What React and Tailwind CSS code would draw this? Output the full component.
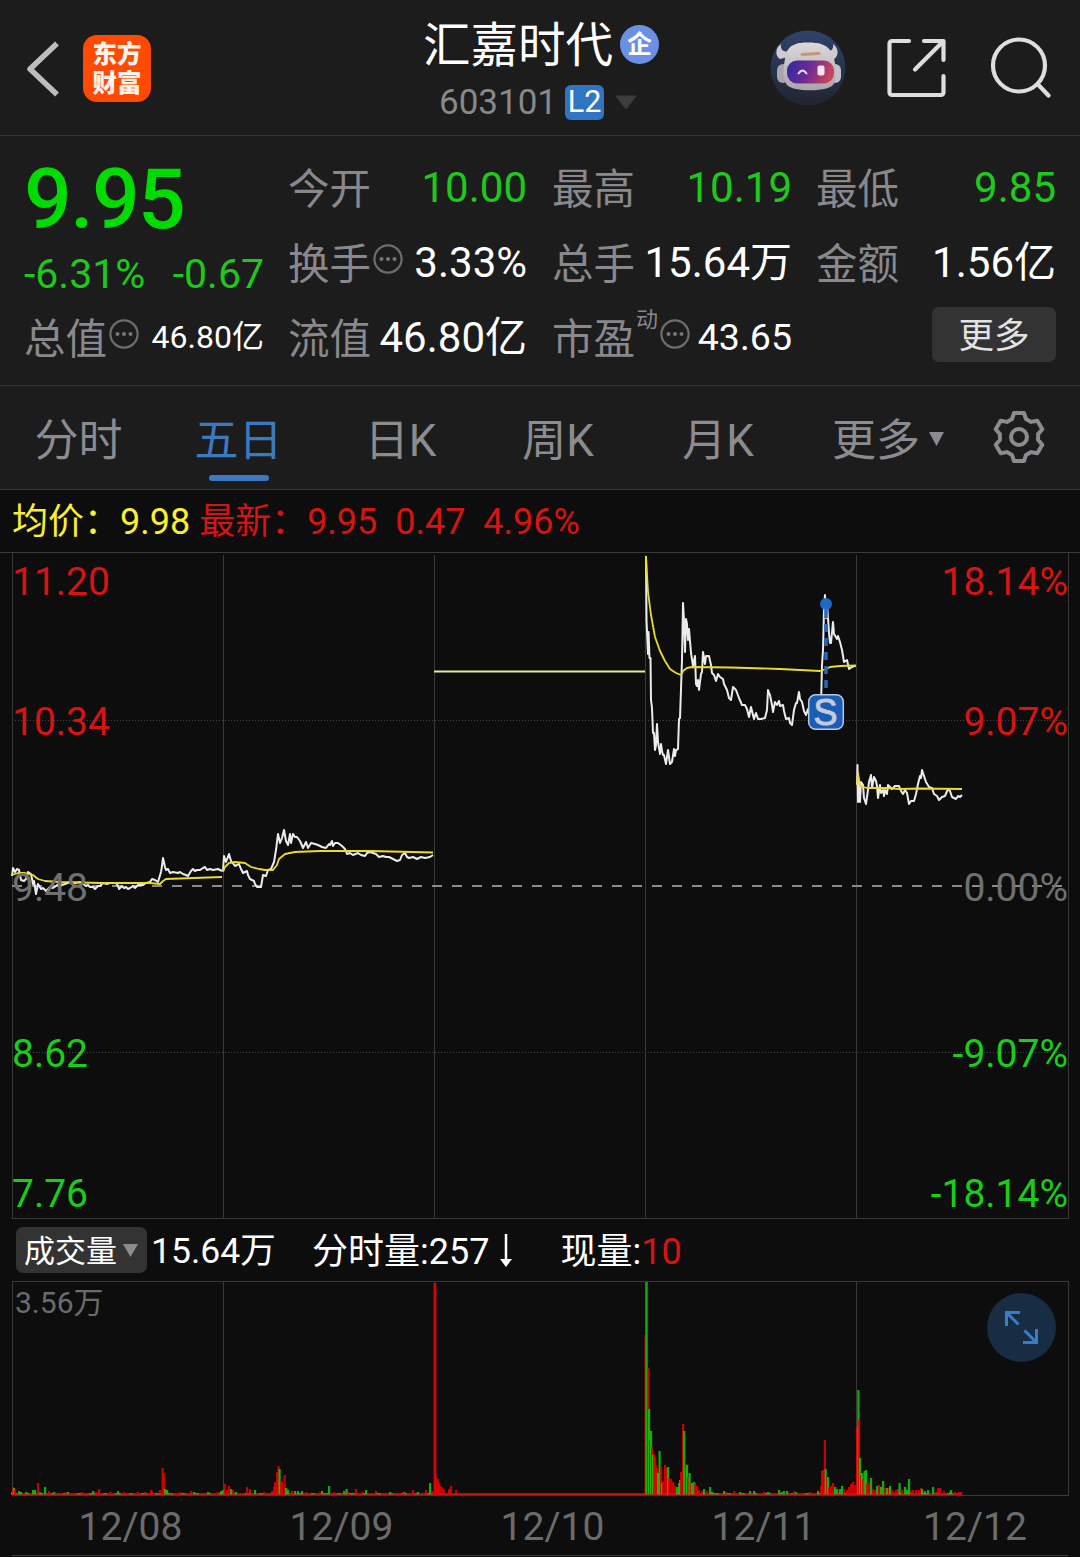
const PRICE = [
    "12,876 13,868 15,872 17,869 19,870 21,880 24,881 26,879 28,872 31,874 33,884 34,881 36,894 38,884 41,889 43,888 46,891 50,887 53,888 56,886 60,883 62,885 65,884 70,882 75,883 80,882 83,884 86,886 88,885 90,887 93,887 95,889 98,886 100,886 103,883 107,884 110,883 116,883 118,886 119,889 122,886 124,888 126,887 128,889 130,888 133,886 135,888 138,885 143,885 146,883 150,882 152,879 155,880 158,882 161,872 162,866 163,858 165,867 166,870 168,869 170,873 173,872 178,873 180,872 183,874 186,875 188,876 191,871 193,869 195,871 197,870 200,870 203,868 205,867 207,870 210,869 213,870 218,869 222,871",
    "223,871 224,856 226,862 229,854 231,861 235,866 239,864 241,869 243,873 247,871 248,875 250,879 254,881 255,884 257,887 261,887 263,875 266,876 268,870 271,869 274,862 276,850 278,834 280,843 282,838 284,830 286,841 288,845 290,834 291,843 293,834 295,837 297,837 300,841 303,848 306,842 308,848 311,843 315,844 318,845 322,847 326,848 329,844 330,845 332,841 333,846 335,843 338,843 342,846 345,849 347,854 350,853 353,855 358,853 361,855 365,856 367,853 370,852 373,853 376,854 379,857 383,856 386,857 389,857 393,859 397,861 400,860 402,855 405,853 407,857 409,858 413,857 417,859 421,857 425,858 430,857 433,855",
    "646,556 646.5,620 648,654 648.5,632 649.5,658 650.5,658 651,700 652,708 653,733 654,733 655,750 656,745 657,724 658,742 660,754 661,744 662,751 663,755 664,755 666,764 668,750 669,757 670,764 672,762 674,749 675,756 676,750 678,749 679,719 680,718 682,660 683,603 684,620 685,652 686,619 687,624 688,640 689,629 691,653 693,666 695,656 696,684 697,686 698,680 699,690 701,674 702,672 703,652 705,664 706,656 709,656 711,665 712,673 714,675 716,681 718,674 720,677 723,679 724,684 727,690 729,698 731,700 733,687 736,690 739,698 742,705 745,705 747,709 749,717 751,707 754,719 756,713 758,719 761,719 765,718 767,710 768,690 770,695 772,705 773,712 775,702 777,705 779,701 780,706 783,705 784,711 786,719 789,718 790,723 792,725 794,710 796,703 797,703 799,692 800,699 802,702 804,711 806,715 808,709 809,714 812,710 813,704 815,698 816,705 818,702 821,706 822,665 823,650 824,610 825,595 826,618 827,604 829,633 830,643 831,643 833,622 834,634 837,639 838,636 840,642 842,650 844,662 847,660 849,669 852,667 854,666 856,666",
    "857,785 857.5,765 858,802 859,782 860,802 861,782 863,785 864,798 866,804 868,790 869,782 871,775 872,788 874,777 876,781 877,786 878,798 880,785 881,793 883,790 884,796 885,790 887,794 888,785 890,787 892,789 895,786 899,786 901,791 903,794 905,790 907,793 909,804 911,801 914,801 916,794 918,784 920,776 921,778 922,770 924,776 926,782 929,787 932,788 934,794 937,796 939,800 942,797 945,796 948,789 950,791 952,797 954,798 956,799 958,796 960,797 962,795",
]

const AVERAGE = [
    "12,875 18,873 25,873 33,875 38,879 45,881 60,882 100,883 150,883 160,884 163,881 166,879 222,877",
    "223,872 225,867 229,863 235,862 245,863 251,867 259,869 265,870 273,870 277,865 279,859 285,854 295,852 320,851 370,851 433,852.5",
    "646,556 648,592 651,615 655,637 660,651 665,661 670,669 676,673 681,675 683,671 687,668 692,667 730,667.5 780,669 820,671 826,669 830,667 840,666 856,665.5",
    "857,785 858,773 860,786 867,788 885,788 900,789 920,788.5 962,789",
]

const R = "#e60000"
const G = "#0ccc0c"

// x, height, colour
const SPIKES = [
    [13, 8, R], [14, 7, G], [15, 5, R], [19, 4, G], [21, 3, G], [33, 5, G], [35, 5, G], [38, 12, R], [45, 8, G], [49, 4, R],
    [66, 3, R], [93, 4, G], [99, 6, R], [118, 4, G], [145, 3, R], [151, 5, R], [160, 5, R], [162.5, 27, R], [164, 22, R], [165, 6, G], [167, 5, G],
    [191, 4, R], [218, 3, R], [221, 4, G], [223, 5, G], [224.5, 11, R], [227, 5, R], [229, 9, R], [231, 6, G], [233, 5, R],
    [247, 8, R], [250, 6, R], [255, 5, G], [272, 4, R], [274, 8, R], [275, 13, R], [277, 23, R], [278.5, 29, R], [279.5, 26, G], [281, 14, R],
    [282, 13, R], [284.5, 20, R], [286, 7, G], [288, 5, G], [292, 4, R], [295, 4, G], [298, 4, G], [302, 4, G], [322, 4, G], [329, 9, G],
    [344, 4, G], [346.5, 6, G], [356, 6, R], [366, 5, G], [376, 4, R], [403, 3, R], [413, 5, R], [426, 5, R], [430, 12, G], [432, 4, R],
    [434.5, 212, R], [435.2, 212, R], [436, 18, R], [438, 16, R], [439, 12, R], [440, 9, R], [442, 8, R], [444, 6, R], [449, 6, R], [451, 9, R], [456, 5, R],
    [645.5, 160, R], [646.5, 213, G], [648.5, 127, R], [649, 86, G], [650, 55, R], [651, 64, G], [652, 48, R], [653, 40, G], [654, 41, R], [655, 38, R],
    [656, 30, R], [657, 27, R], [658, 22, G], [659.5, 44, G], [661, 28, R], [662, 12, G], [663, 14, R], [665, 30, R], [666, 27, R], [668, 28, G],
    [669, 17, R], [671, 16, R], [673, 13, R], [675, 9, R], [677, 8, G], [679, 12, G], [680, 15, G], [681, 23, R], [683, 71, R], [684.2, 64, G],
    [686, 31, R], [687, 30, G], [688, 18, R], [689.5, 22, G], [691, 11, R], [692, 12, G], [694, 13, G], [695, 12, R], [697, 9, R], [699, 5, R],
    [702, 4, R], [704, 6, G], [707, 4, R], [710, 8, G], [712, 3, G], [724, 4, G], [734, 4, R], [750, 4, G], [754, 4, G], [764, 3, R],
    [779, 5, G], [784, 4, G], [787, 4, G], [794, 4, R], [818, 4, G], [821, 9, R], [822, 24, R], [823, 25, R], [824.8, 55, R], [825.6, 26, G],
    [827, 18, R], [828, 18, G], [829, 7, R], [831, 9, R], [833, 12, R], [835, 8, G], [837, 6, G], [840, 6, G], [842, 9, G], [844, 6, R],
    [847, 5, R], [849, 8, R], [851, 11, R], [853, 13, R], [855, 10, R], [857, 68, R], [858.3, 105, G], [859, 75, R], [860, 37, G], [861, 20, R],
    [862, 22, G], [863, 16, R], [864.5, 24, G], [866, 25, G], [867, 11, R], [869, 13, R], [871, 17, G], [873, 6, R], [875, 5, R], [877, 9, G],
    [879, 10, R], [881, 8, G], [883, 14, G], [885, 7, R], [887, 7, G], [889, 7, R], [890, 9, G], [892, 5, R], [896, 5, R], [898, 6, R],
    [899.5, 12, G], [902, 5, R], [905, 8, G], [907, 5, G], [909, 16, G], [911, 4, R], [913, 5, R], [916, 5, R], [919, 5, R], [921, 7, R], [922, 6, G],
    [925, 4, G], [928, 5, G], [933, 8, G], [936, 3, R], [938, 7, R], [940, 7, R], [944, 4, R], [951, 5, G], [955, 3, R], [959, 3, R], [961, 3, R],
]

const FLOOR = []
for (let i = 0; i < 475; i++) {
    const x = 12 + i * 2
    const locked = x > 434 && x < 645
    const green = !locked && (i * 7919) % 13 < 5
    if (x < 963) FLOOR.push([x, locked ? 2 : 2 + ((i * 31) % 7 === 0 ? 1 : 0), green ? G : R])
}

const PRICE_LABELS = [
    { y: 595, left: "11.20", right: "18.14%", className: "fill-[#d81313]" },
    { y: 735, left: "10.34", right: "9.07%", className: "fill-[#d81313]" },
    { y: 901, left: "9.48", right: "0.00%", className: "fill-[#707070]" },
    { y: 1067, left: "8.62", right: "-9.07%", className: "fill-[#17cf17]" },
    { y: 1207, left: "7.76", right: "-18.14%", className: "fill-[#17cf17]" },
]

const TABS = [
    { label: "分时", width: "w-[157px]" },
    { label: "五日", width: "w-[163px]", active: true },
    { label: "日K", width: "w-[161px]" },
    { label: "周K", width: "w-[154px]" },
    { label: "月K", width: "w-[166px]" },
]

function InfoDots() {
    return (
        <svg className="h-[30px] w-[30px] shrink-0" viewBox="0 0 30 30">
            <circle cx="15" cy="15" r="13.6" fill="none" stroke="#6d6d6f" strokeWidth="2.2" />
            <g fill="#77777a">
                <circle cx="8.5" cy="15" r="2" />
                <circle cx="15" cy="15" r="2" />
                <circle cx="21.5" cy="15" r="2" />
            </g>
        </svg>
    )
}

function Robot() {
    return (
        <svg className="h-[76px] w-[76px]" viewBox="0 0 76 76">
            <defs>
                <linearGradient id="sky" x1="0" y1="0" x2="0" y2="1">
                    <stop offset="0" stopColor="#30436b" />
                    <stop offset="1" stopColor="#20242d" />
                </linearGradient>
                <linearGradient id="visor" x1="0" y1="0" x2="1" y2="0.2">
                    <stop offset="0" stopColor="#2b2ba0" />
                    <stop offset="0.5" stopColor="#6a2a94" />
                    <stop offset="1" stopColor="#c8435f" />
                </linearGradient>
                <linearGradient id="shell" x1="0" y1="0" x2="0" y2="1">
                    <stop offset="0" stopColor="#dcd8dc" />
                    <stop offset="1" stopColor="#aaa5ab" />
                </linearGradient>
            </defs>
            <circle cx="38" cy="38" r="37.5" fill="url(#sky)" />
            <path
                d="M11 14C5 18 5 26 10 29l8-2 3-6c-7 2-11-1-10-7zM63 14c6 4 6 12 1 15l-8-2-3-6c7 2 11-1 10-7z"
                fill="#cfcbd0"
            />
            <rect x="7" y="34" width="12" height="19" rx="6" fill="#aaa5ad" />
            <rect x="59" y="34" width="12" height="19" rx="6" fill="#c5c0c5" />
            <path
                d="M26 14c4-2 20-2 25 0 7 2 11 7 13 14 2 9 3 23-1 27-6 7-40 7-46 0-4-5-4-17-2-26 1-8 4-13 11-15z"
                fill="url(#shell)"
            />
            <rect x="17" y="30.500" width="47" height="23" rx="10" fill="url(#visor)" />
            <path d="M32 24.500 49 23.500" fill="none" stroke="#c99570" strokeWidth="3" strokeLinecap="round" />
            <path d="M28.500 43.500q4-6 8 0" fill="none" stroke="#e3dff5" strokeWidth="2" strokeLinecap="round" />
            <rect x="47.500" y="35.500" width="7" height="10" rx="2" fill="#f3e6f0" />
        </svg>
    )
}

function Header() {
    return (
        <header className="flex h-[136px] items-center border-b border-[#353535] pl-[26px] pr-[29px]">
            <svg className="mt-[2px] h-[56px] w-[34px]" viewBox="0 0 34 56">
                <path d="M31 2.500 4 28l27 25.500" fill="none" stroke="#bdbdbd" strokeWidth="5.500" strokeLinejoin="round" />
            </svg>
            <div className="mt-[2px] ml-[23px] flex h-[67px] w-[68px] flex-col items-center justify-center rounded-[14px] bg-[#ff4a03] text-[24.500px] leading-[29px] font-black text-[#fff4ec]">
                <span>东方</span>
                <span>财富</span>
            </div>
            <div className="ml-[272px] flex w-[238px] flex-col">
                <div className="-mt-[2px] flex h-[66px] items-center">
                    <h1 className="text-[47.500px] leading-[66px] text-white">汇嘉时代</h1>
                    <span className="-mt-[4px] ml-[7px] flex h-[39px] w-[39px] shrink-0 items-center justify-center rounded-full bg-[#6b90e6] text-[25px] leading-none font-bold text-white">
                        企
                    </span>
                </div>
                <div className="mt-[5px] flex h-[36px] items-center pl-[16px]">
                    <span className="text-[35px] leading-none text-[#88888d]">603101</span>
                    <span className="ml-[8px] flex h-[35px] w-[39px] items-center justify-center rounded-[6px] bg-[#3074c4] text-[30.500px] leading-none text-white">
                        L2
                    </span>
                    <svg className="ml-[11px] h-[15px] w-[22px]" viewBox="0 0 22 15">
                        <path d="M1 1h20L11 14z" fill="#3d3d3d" stroke="#3d3d3d" strokeLinejoin="round" />
                    </svg>
                </div>
            </div>
            <div className="ml-auto flex items-center">
                <Robot />
                <svg className="ml-[41px] h-[60px] w-[60px]" viewBox="0 0 60 60" fill="none" stroke="#dedede" strokeWidth="4.200" strokeLinecap="round" strokeLinejoin="round">
                    <path d="M22 3H5a2.500 2.500 0 0 0-2.500 2.500v49A2.500 2.500 0 0 0 5 57h49a2.500 2.500 0 0 0 2.500-2.500V38M37 3h19.500v19M56 3.500 28 31.500" />
                </svg>
                <svg className="ml-[42px] h-[62px] w-[62px]" viewBox="0 0 62 62" fill="none" stroke="#dedede" strokeWidth="4.200" strokeLinecap="round">
                    <circle cx="30" cy="28.500" r="26" />
                    <path d="M48.500 47 59.500 58.500" />
                </svg>
            </div>
        </header>
    )
}

function Stat({ label, value, dots, green }) {
    return (
        <div className="flex h-[75px] items-center justify-between">
            <span className="mt-[2px] flex items-center text-[41.500px] text-[#88888d]">
                {label}
                {dots && (
                    <span className="-mt-[12px] ml-[2px]">
                        <InfoDots />
                    </span>
                )}
            </span>
            <span className={green ? "-mt-[2px] text-[42px] text-[#1dc91d]" : "-mt-[1px] text-[42px] text-white"}>{value}</span>
        </div>
    )
}

function Quote() {
    return (
        <section className="flex h-[250px] items-start border-b border-[#353535] pl-[24px] pr-[24px] pt-[15px] leading-none whitespace-nowrap">
            <div className="flex w-[240px] flex-col">
                <span className="h-[97px] text-[84px] leading-[98px] font-medium tracking-[-1.600px] text-[#00db00]">9.95</span>
                <div className="flex h-[53px] items-center justify-between text-[41px] text-[#1dc91d]">
                    <span>-6.31%</span>
                    <span>-0.67</span>
                </div>
                <div className="flex h-[75px] items-center justify-between">
                    <span className="mt-[2px] flex items-center text-[41.500px] text-[#88888d]">
                        总值
                        <span className="-mt-[12px] ml-[2px]">
                            <InfoDots />
                        </span>
                    </span>
                    <span className="-mt-[3px] text-[32px] text-white">46.80亿</span>
                </div>
            </div>
            <div className="ml-[24px] w-[239px]">
                <Stat label="今开" value="10.00" green />
                <Stat label="换手" value="3.33%" dots />
                <Stat label="流值" value="46.80亿" />
            </div>
            <div className="ml-[25px] w-[240px]">
                <Stat label="最高" value="10.19" green />
                <Stat label="总手" value="15.64万" />
                <div className="flex h-[75px] items-center justify-between text-[#88888d]">
                    <span className="mt-[2px] flex items-center text-[41.500px]">
                        市盈
                        <span className="-mt-[40px] ml-[1px] text-[22px]">动</span>
                        <span className="-mt-[12px] ml-[2px]">
                            <InfoDots />
                        </span>
                    </span>
                    <span className="-mt-[2px] text-[37.500px] text-white">43.65</span>
                </div>
            </div>
            <div className="ml-[24px] w-[240px]">
                <Stat label="最低" value="9.85" green />
                <Stat label="金额" value="1.56亿" />
                <div className="flex h-[75px] items-center justify-end">
                    <button className="-mt-[8px] h-[55px] w-[124px] rounded-[7px] bg-[#333333] pt-[4px] text-[35.500px] leading-none text-[#e3e3e3]">更多</button>
                </div>
            </div>
        </section>
    )
}

function Tabs() {
    return (
        <nav className="flex h-[104px] border-b border-[#353535] text-[44px] leading-none whitespace-nowrap text-[#8b8b90]">
            {TABS.map(({ label, width, active }) => (
                <div key={label} className={`${width} flex flex-col items-center pt-[33px] ${active ? "text-[#3b79c0]" : ""}`}>
                    <span className="h-[44px]">{label}</span>
                    {active && <span className="mt-[12px] h-[6px] w-[60px] rounded-full bg-[#3b79c0]" />}
                </div>
            ))}
            <div className="mt-[33px] flex h-[44px] items-center pl-[31px]">
                <span>更多</span>
                <svg className="-mt-[5px] ml-[9px] h-[14px] w-[15px]" viewBox="0 0 15 14">
                    <path d="M0 0h15L7.500 14z" fill="#8b8b90" />
                </svg>
            </div>
            <svg className="mt-[24px] ml-[48px] h-[54px] w-[54px]" viewBox="0 0 54 54" fill="none" stroke="#8b8b90" strokeWidth="4" strokeLinejoin="round">
                <path d="M22 3h10l2 6 5.100 2.900 6.200-1.200 5 8.600-4.200 4.800v5.800l4.200 4.800-5 8.600-6.200-1.200L34 45l-2 6H22l-2-6-5.100-2.900-6.200 1.200-5-8.600 4.200-4.800v-5.800l-4.200-4.800 5-8.600 6.200 1.200L20 9z" />
                <circle cx="27" cy="27" r="8" />
            </svg>
        </nav>
    )
}

function PriceChart() {
    return (
        <svg className="block h-[667px] w-[1080px]" viewBox="0 552 1080 667">
            <g stroke="#3a3a3a" strokeWidth="1" shapeRendering="crispEdges">
                <path d="M0 552.500h1080M12 1218.500h1057M12.500 553v666M223.500 555v664M434.500 555v664M645.500 555v664M856.500 555v664M1068.500 553v666" fill="none" />
                <path d="M12 720.500h1056M12 1052.500h1056" strokeDasharray="1 2" stroke="#444444" />
            </g>
            <path d="M12 886h1056" stroke="#8b8b8b" strokeWidth="2" strokeDasharray="10 10" />
            <g fill="none" strokeWidth="2" strokeLinejoin="round">
                {PRICE.map((points) => (
                    <polyline key={points} points={points} stroke="#ececec" />
                ))}
                {AVERAGE.map((points) => (
                    <polyline key={points} points={points} stroke="#e8dc2c" strokeWidth="1.800" />
                ))}
                <path d="M434 671.500h211" stroke="#e9e7a2" />
            </g>
            <g fontSize="39">
                {PRICE_LABELS.map(({ y, left, right, className }) => (
                    <g key={y} className={className}>
                        <text x="12" y={y}>{left}</text>
                        <text x="1068" y={y} textAnchor="end">{right}</text>
                    </g>
                ))}
            </g>
            <path d="M826 610v84" stroke="#2467bd" strokeWidth="3.500" strokeDasharray="8 6" />
            <circle cx="826" cy="604" r="6" fill="#1f68c8" />
            <rect x="808.700" y="694.700" width="34.600" height="34.600" rx="7" fill="#1b5db5" stroke="#b5c9e4" strokeWidth="1.500" />
            <text
                x="825.500"
                y="725"
                textAnchor="middle"
                fontSize="36"
                strokeWidth="1"
                className="fill-[#c3cbd8] stroke-[#c3cbd8] font-['Liberation_Sans',sans-serif]"
            >
                S
            </text>
        </svg>
    )
}

function VolumeChart() {
    return (
        <svg className="block h-[216px] w-[1080px]" viewBox="0 1281 1080 216">
            <path
                d="M12 1281.500h1057M12 1495.500h1057M12.500 1281v214M223.500 1281v214M434.500 1281v214M645.500 1281v214M856.500 1281v214M1068.500 1281v214"
                fill="none"
                stroke="#3a3a3a"
                shapeRendering="crispEdges"
            />
            {[...FLOOR, ...SPIKES].map(([x, h, color], i) => (
                <rect key={i} x={x - 1} y={1495 - h} width="2.200" height={h} fill={color} opacity="0.85" />
            ))}
            <path d="M12 1494.500h950" stroke="#c01818" strokeOpacity="0.7" />
            <text x="15" y="1313" fontSize="30" className="fill-[#6b6b6b]">3.56万</text>
            <circle cx="1021.500" cy="1327.500" r="34.500" fill="#182c43" />
            <path
                d="M1006.500 1326v-13.500h13.500M1007 1313l11.500 11.500M1036.500 1329v13.500h-13.500M1036 1342l-11.500-11.500"
                fill="none"
                stroke="#3a7cc8"
                strokeWidth="3"
            />
        </svg>
    )
}

export default function App() {
    return (
        <div
            lang="zh-CN"
            className="flex h-[1557px] w-[1080px] flex-col overflow-hidden bg-[#0d0d0d] font-['Roboto','Noto_Sans_CJK_SC',sans-serif]"
        >
            <div className="bg-[#1c1c1c]">
                <Header />
                <Quote />
                <Tabs />
            </div>
            <div className="flex h-[62px] items-center pt-[2px] pl-[12px] text-[36px] leading-none whitespace-pre">
                <span className="text-[#fbf02f]">均价：9.98 </span>
                <span className="text-[#d81313]">最新：9.95  0.47  4.96%</span>
            </div>
            <PriceChart />
            <div className="flex h-[62px] items-center pl-[16px] text-[36px] leading-none whitespace-nowrap text-white">
                <button className="flex h-[46px] w-[131px] items-center rounded-[7px] bg-[#333333] pl-[8px] text-[31px]">
                    <span className="mt-[2px]">成交量</span>
                    <svg className="ml-[6px] h-[13px] w-[15px]" viewBox="0 0 15 13">
                        <path d="M0 0h15L7.500 13z" fill="#8b8b90" />
                    </svg>
                </button>
                <span className="mt-[3px] ml-[4px] w-[161px] text-[35.500px]">15.64万</span>
                <span className="mt-[3px]">分时量:257</span>
                <svg className="ml-[11px] h-[34px] w-[12px]" viewBox="0 0 12 34">
                    <path d="M6 1v26" stroke="white" strokeWidth="2.500" />
                    <path d="M0 26h12L6 34z" fill="white" />
                </svg>
                <span className="mt-[3px] ml-[48px]">现量:</span>
                <span className="mt-[3px] text-[#d81313]">10</span>
            </div>
            <VolumeChart />
            <div className="mx-[12px] flex h-[59px] items-center border-b border-[#3a3a3a] pt-[3px] text-[39px] leading-none text-[#6b6b6b]">
                <span className="w-[211px] pl-[26px] text-center">12/08</span>
                <span className="w-[211px] pl-[26px] text-center">12/09</span>
                <span className="w-[211px] pl-[26px] text-center">12/10</span>
                <span className="w-[211px] pl-[26px] text-center">12/11</span>
                <span className="w-[212px] pl-[26px] text-center">12/12</span>
            </div>
        </div>
    )
}
